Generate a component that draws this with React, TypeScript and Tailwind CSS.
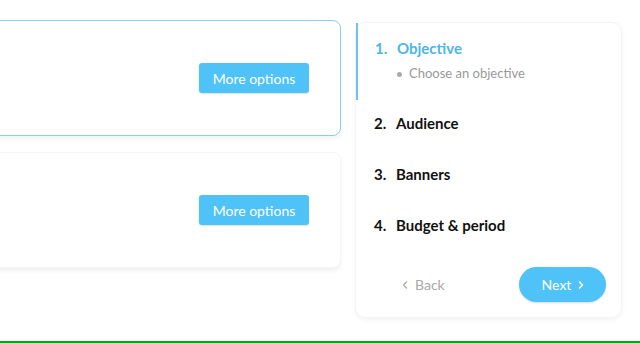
import { ChevronLeft, ChevronRight } from "lucide-react";

const steps = [
  { num: "2.", title: "Audience" },
  { num: "3.", title: "Banners" },
  { num: "4.", title: "Budget & period" },
];

const OptionCard = ({ active }: { active?: boolean }) => (
  <div
    className={`h-[116px] rounded-[8px] bg-white flex items-center justify-end pr-[31px] ${
      active
        ? "border border-[#8ccdeb] shadow-[0_3px_4px_rgba(0,0,0,0.05)]"
        : "border border-[#f4f5f7] shadow-[0_3px_4px_rgba(0,0,0,0.06)]"
    }`}
  >
    <button className="w-[110px] h-[30px] rounded-[3px] bg-[#4fc3f7] text-white text-[14px] shadow-[0_1px_1px_rgba(0,0,0,0.12)]">
      More options
    </button>
  </div>
);

export default function App() {
  return (
    <div
      className="w-[640px] h-[343px] bg-white overflow-hidden flex flex-col"
      style={{ fontFamily: "Lato, 'Open Sans', sans-serif" }}
    >
      <div className="flex-1 flex">
        <div className="w-[361px] -ml-[20px] pt-[20px] flex flex-col gap-[16px]">
          <OptionCard active />
          <OptionCard />
        </div>
        <div className="ml-[14px] mt-[22px] w-[267px] h-[296px] rounded-[10px] bg-white border border-[#f3f4f6] shadow-[0_2px_5px_rgba(0,0,0,0.05)] flex flex-col">
          <div className="h-[77px] border-l-2 border-[#6cc4ea] pl-[17px] pt-[15px]">
            <div className="flex items-center h-[20px] text-[15px] font-bold text-[#4db6e6]">
              <span className="w-[22px]">1.</span>
              <span>Objective</span>
            </div>
            <div className="flex items-center h-[20px] mt-[6px] pl-[22px] text-[13px] text-[#999]">
              <span className="w-[5px] h-[5px] rounded-full bg-[#aaa] mr-[7px]" />
              <span>Choose an objective</span>
            </div>
          </div>
          <div className="-mt-[2px]">
            {steps.map((s) => (
              <div
                key={s.num}
                className="h-[51px] flex items-center pl-[18px] text-[15px] font-bold text-[#111]"
              >
                <span className="w-[22px]">{s.num}</span>
                <span>{s.title}</span>
              </div>
            ))}
          </div>
          <div className="flex items-center justify-between pl-[43px] pr-[15px] mt-[16px]">
            <div className="flex items-center text-[14px] text-[#a8a8a8]">
              <ChevronLeft size={12} strokeWidth={2.5} className="mr-[4px]" />
              <span>Back</span>
            </div>
            <button className="w-[87px] h-[35px] rounded-full bg-[#4fc3f7] text-white text-[14px] flex items-center justify-center pl-[4px] shadow-[0_1px_2px_rgba(0,0,0,0.15)]">
              <span>Next</span>
              <ChevronRight size={12} strokeWidth={3} className="ml-[4px]" />
            </button>
          </div>
        </div>
      </div>
      <div className="h-[2px] bg-[#12a012]" />
    </div>
  );
}
